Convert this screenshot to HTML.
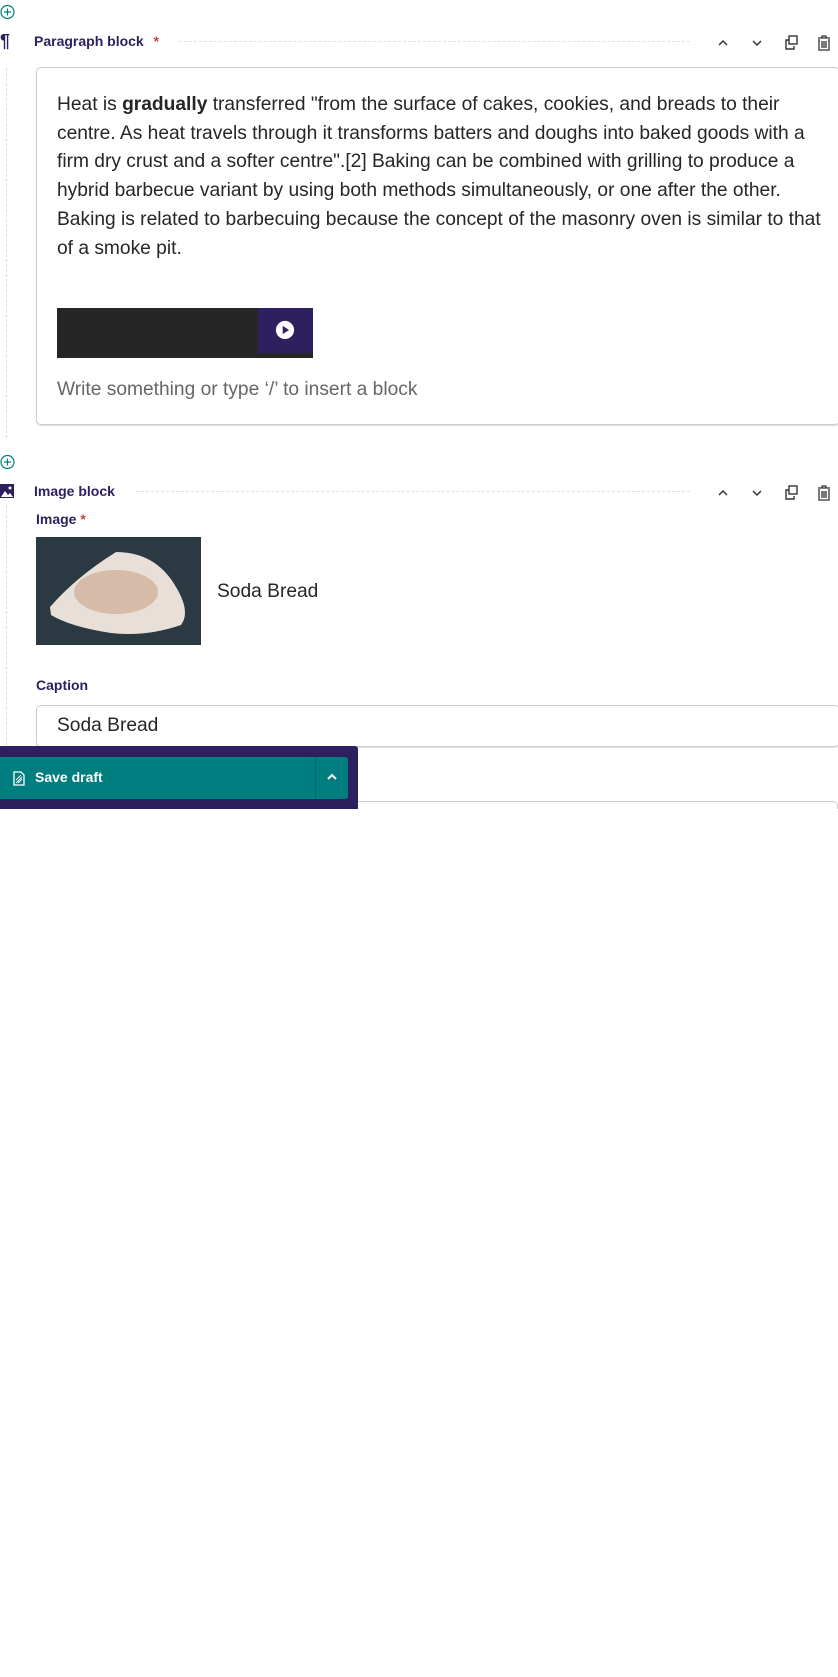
<!DOCTYPE html>
<html><head><style>
body{margin:0;width:838px;height:1677px;background:#fff;font-family:"Liberation Sans",sans-serif;position:relative;overflow:hidden;color:#262626}
.abs{position:absolute}
.lbl{color:#2e1f5e;font-size:14px;font-weight:bold}
.dots{border-top:1px dashed #e0e0e0;height:0}
.vline{border-left:1px dashed #ddd;width:0}
.card{border:1px solid #ccc;border-radius:5px;box-shadow:0 1px 1px #ddd}
</style></head><body>
<svg class="abs" style="left:0;top:4px" width="16" height="16" viewBox="0 0 16 16"><circle cx="7.5" cy="8" r="6.5" fill="none" stroke="#007d7e" stroke-width="1.2"/><path d="M7.5 4.5v7M4 8h7" stroke="#007d7e" stroke-width="1.2"/></svg>
<svg class="abs" style="left:0;top:454px" width="16" height="16" viewBox="0 0 16 16"><circle cx="7.5" cy="8" r="6.5" fill="none" stroke="#007d7e" stroke-width="1.2"/><path d="M7.5 4.5v7M4 8h7" stroke="#007d7e" stroke-width="1.2"/></svg>
<div class="abs vline" style="left:6px;top:68px;height:370px"></div>
<div class="abs vline" style="left:6px;top:505px;height:240px"></div>

<div class="abs" style="left:0;top:31px;font-size:18px;font-weight:bold;color:#2e1f5e">¶</div>
<div class="abs lbl" style="left:34px;top:33px">Paragraph block <span style="color:#cd4444;margin-left:6px">*</span></div>
<div class="abs dots" style="left:179px;top:41px;width:511px"></div>
<svg class="abs" style="left:715px;top:34px" width="120" height="18" viewBox="0 0 120 18">
<path d="M4 11l4-4 4 4" fill="none" stroke="#333" stroke-width="1.5"/>
<path d="M38 7l4 4 4-4" fill="none" stroke="#333" stroke-width="1.5"/>
<rect x="74" y="2" width="8" height="8" fill="none" stroke="#333" stroke-width="1.4"/><path d="M74 6h-3v9h8v-3" fill="none" stroke="#333" stroke-width="1.4"/>
<path d="M103 4h12M107 4V2h4v2M104 5v11h10V5M107 7v7M109 7v7M111 7v7" fill="none" stroke="#333" stroke-width="1.3"/>
</svg>

<div class="abs card" style="left:36px;top:67px;width:802px;height:356px"></div>
<div class="abs" style="left:57px;top:91px;font-size:19.2px;line-height:28.7px;white-space:nowrap">Heat is <b>gradually</b> transferred "from the surface of cakes, cookies, and breads to their<br>centre. As heat travels through it transforms batters and doughs into baked goods with a<br>firm dry crust and a softer centre".[2] Baking can be combined with grilling to produce a<br>hybrid barbecue variant by using both methods simultaneously, or one after the other.<br>Baking is related to barbecuing because the concept of the masonry oven is similar to that<br>of a smoke pit.</div>
<div class="abs" style="left:57px;top:308px;width:256px;height:50px;background:#262626"></div>
<div class="abs" style="left:258px;top:308px;width:55px;height:45px;background:#2e1f5e"></div>
<svg class="abs" style="left:275px;top:320px" width="20" height="20" viewBox="0 0 22 22"><circle cx="11" cy="11" r="10" fill="#fff"/><path d="M8.5 6.5v9l7-4.5z" fill="#2e1f5e"/></svg>
<div class="abs" style="left:57px;top:379px;font-size:19.2px;color:#666">Write something or type ‘/’ to insert a block</div>

<svg class="abs" style="left:0;top:484px" width="15" height="15" viewBox="0 0 15 15"><rect x="0" y="0" width="14" height="14" fill="#2e1f5e"/><path d="M1 13l4-6 3 4 2-2 3 4z" fill="#fff"/><circle cx="10" cy="4" r="1.5" fill="#fff"/></svg>
<div class="abs lbl" style="left:34px;top:483px">Image block</div>
<div class="abs dots" style="left:136px;top:491px;width:554px"></div>
<svg class="abs" style="left:715px;top:484px" width="120" height="18" viewBox="0 0 120 18">
<path d="M4 11l4-4 4 4" fill="none" stroke="#333" stroke-width="1.5"/>
<path d="M38 7l4 4 4-4" fill="none" stroke="#333" stroke-width="1.5"/>
<rect x="74" y="2" width="8" height="8" fill="none" stroke="#333" stroke-width="1.4"/><path d="M74 6h-3v9h8v-3" fill="none" stroke="#333" stroke-width="1.4"/>
<path d="M103 4h12M107 4V2h4v2M104 5v11h10V5M107 7v7M109 7v7M111 7v7" fill="none" stroke="#333" stroke-width="1.3"/>
</svg>
<div class="abs lbl" style="left:36px;top:511px">Image <span style="color:#cd4444">*</span></div>
<svg class="abs" style="left:36px;top:537px" width="165" height="108" viewBox="0 0 165 108"><rect width="165" height="108" fill="#2b3a42"/><path d="M14 70 Q40 40 80 15 Q120 15 140 50 Q155 75 145 88 Q110 100 75 96 Q35 90 15 78z" fill="#e8e0d8"/><ellipse cx="80" cy="55" rx="42" ry="22" fill="#c9a488" opacity=".6"/></svg>
<div class="abs" style="left:217px;top:581px;font-size:19.2px">Soda Bread</div>
<div class="abs lbl" style="left:36px;top:677px">Caption</div>
<div class="abs card" style="left:36px;top:705px;width:802px;height:40px"></div>
<div class="abs" style="left:57px;top:715px;font-size:19.2px">Soda Bread</div>
<div class="abs" style="left:36px;top:801px;width:802px;height:8px;overflow:hidden"><div class="card" style="height:40px"></div></div>

<div class="abs" style="left:0;top:746px;width:358px;height:63px;background:#2e1f5e;border-radius:0 3px 0 0"></div>
<div class="abs" style="left:0;top:757px;width:348px;height:42px;background:#007d7e;border-radius:0 3px 3px 0"></div>
<div class="abs" style="left:315px;top:757px;width:1px;height:42px;background:#006b6c"></div>
<svg class="abs" style="left:13px;top:771px" width="12" height="15" viewBox="0 0 12 15"><path d="M1 1h7l3 3v10H1z" fill="none" stroke="#fff" stroke-width="1.3"/><path d="M3 12l6-6M3 9l5-5M5 12l4-4" stroke="#fff" stroke-width=".9"/></svg>
<div class="abs" style="left:35px;top:769px;color:#fff;font-weight:bold;font-size:14px">Save draft</div>
<svg class="abs" style="left:325px;top:771px" width="14" height="12" viewBox="0 0 14 12"><path d="M3 8l4-4 4 4" fill="none" stroke="#fff" stroke-width="2"/></svg>
</body></html>
